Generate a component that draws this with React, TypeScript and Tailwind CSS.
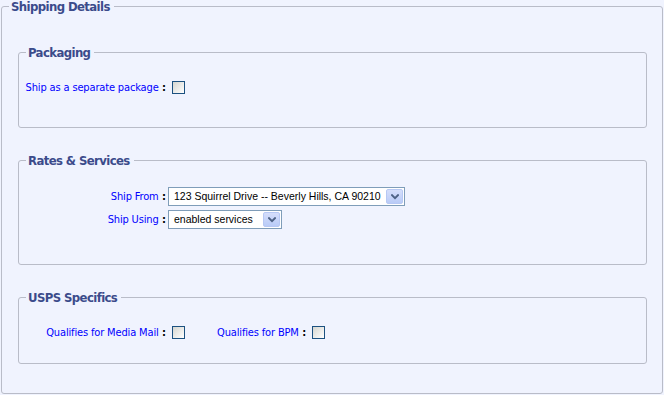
import React from "react";

const LABEL = "font-['DejaVu_Sans_Condensed','Liberation_Sans',sans-serif] text-[11px] tracking-[-0.15px] leading-[13px] text-[#0000ff] whitespace-nowrap";
const LEGEND = "ml-0 pl-[2px] pr-[4px] h-[13px] leading-[13px] font-['DejaVu_Sans_Condensed','Liberation_Sans',sans-serif] font-bold text-[13px] tracking-[-0.6px] text-[#3b4b8b] whitespace-nowrap";

function Colon() {
  return <span className="font-bold text-black tracking-normal"> :</span>;
}

function Check() {
  return (
    <input
      type="checkbox"
      className="appearance-none m-0 ml-[4px] block h-[13px] w-[13px] shrink-0 border border-[#1c5180] bg-linear-to-br from-[#d6d6d0] to-white"
    />
  );
}

function Chevron() {
  return (
    <svg width="8" height="6" viewBox="0 0 8 6">
      <path d="M1 1.2 L4 4.2 L7 1.2" stroke="#4d6185" strokeWidth="2" fill="none" strokeLinecap="square" />
    </svg>
  );
}

function Select({ value, wide }: { value: string; wide: boolean }) {
  return (
    <div
      className={
        "flex h-[19px] items-center border border-[#7f9db9] bg-white p-[1px] " +
        (wide ? "w-[237px]" : "w-[114px]")
      }
    >
      <span className="flex-1 pl-[4px] font-['Liberation_Sans',Arial,sans-serif] text-[10.5px] leading-[15px] text-black whitespace-nowrap overflow-hidden">
        {value}
      </span>
      <span className="flex h-full w-[17px] items-center justify-center rounded-[2px] border border-[#b7c8f4] bg-linear-to-b from-[#d5defb] to-[#b9cbf7]">
        <Chevron />
      </span>
    </div>
  );
}

function Label({ children }: { children: React.ReactNode }) {
  return (
    <div className="flex w-[140px] justify-end">
      <span className={LABEL}>
        {children}
        <Colon />
      </span>
    </div>
  );
}

export default function App() {
  return (
    <div className="min-h-screen bg-[#f0f3fe]">
      <fieldset className="ml-[1px] w-[662px] rounded-[3px] border border-[#b9bcc8] px-[7px] pt-[33px] pb-[29px]">
        <legend className={LEGEND}>Shipping Details</legend>

        <fieldset className="ml-[9px] w-[629px] rounded-[3px] border border-[#b9bcc8] px-[7px] pt-[22px] pb-[33px]">
          <legend className={LEGEND}>Packaging</legend>
          <div className="flex h-[13px] items-center">
            <Label>Ship as a separate package</Label>
            <div className="ml-[2px]">
              <Check />
            </div>
          </div>
        </fieldset>

        <fieldset className="ml-[9px] mt-[26px] w-[629px] rounded-[3px] border border-[#b9bcc8] px-[7px] pt-[20px] pb-[35px]">
          <legend className={LEGEND}>Rates &amp; Services</legend>
          <div className="flex flex-col gap-[4px]">
            <div className="flex items-center">
              <Label>Ship From</Label>
              <div className="ml-[2px]">
                <Select value="123 Squirrel Drive -- Beverly Hills, CA 90210" wide={true} />
              </div>
            </div>
            <div className="flex items-center">
              <Label>Ship Using</Label>
              <div className="ml-[2px]">
                <Select value="enabled services" wide={false} />
              </div>
            </div>
          </div>
        </fieldset>

        <fieldset className="ml-[9px] mt-[26px] w-[629px] rounded-[3px] border border-[#b9bcc8] px-[7px] pt-[22px] pb-[24px]">
          <legend className={LEGEND}>USPS Specifics</legend>
          <div className="flex h-[13px] items-center">
            <Label>Qualifies for Media Mail</Label>
            <div className="ml-[2px]">
              <Check />
            </div>
            <div className="ml-[32px] flex">
              <span className={LABEL}>
                Qualifies for BPM
                <Colon />
              </span>
            </div>
            <div className="ml-[2px]">
              <Check />
            </div>
          </div>
        </fieldset>
      </fieldset>
    </div>
  );
}
